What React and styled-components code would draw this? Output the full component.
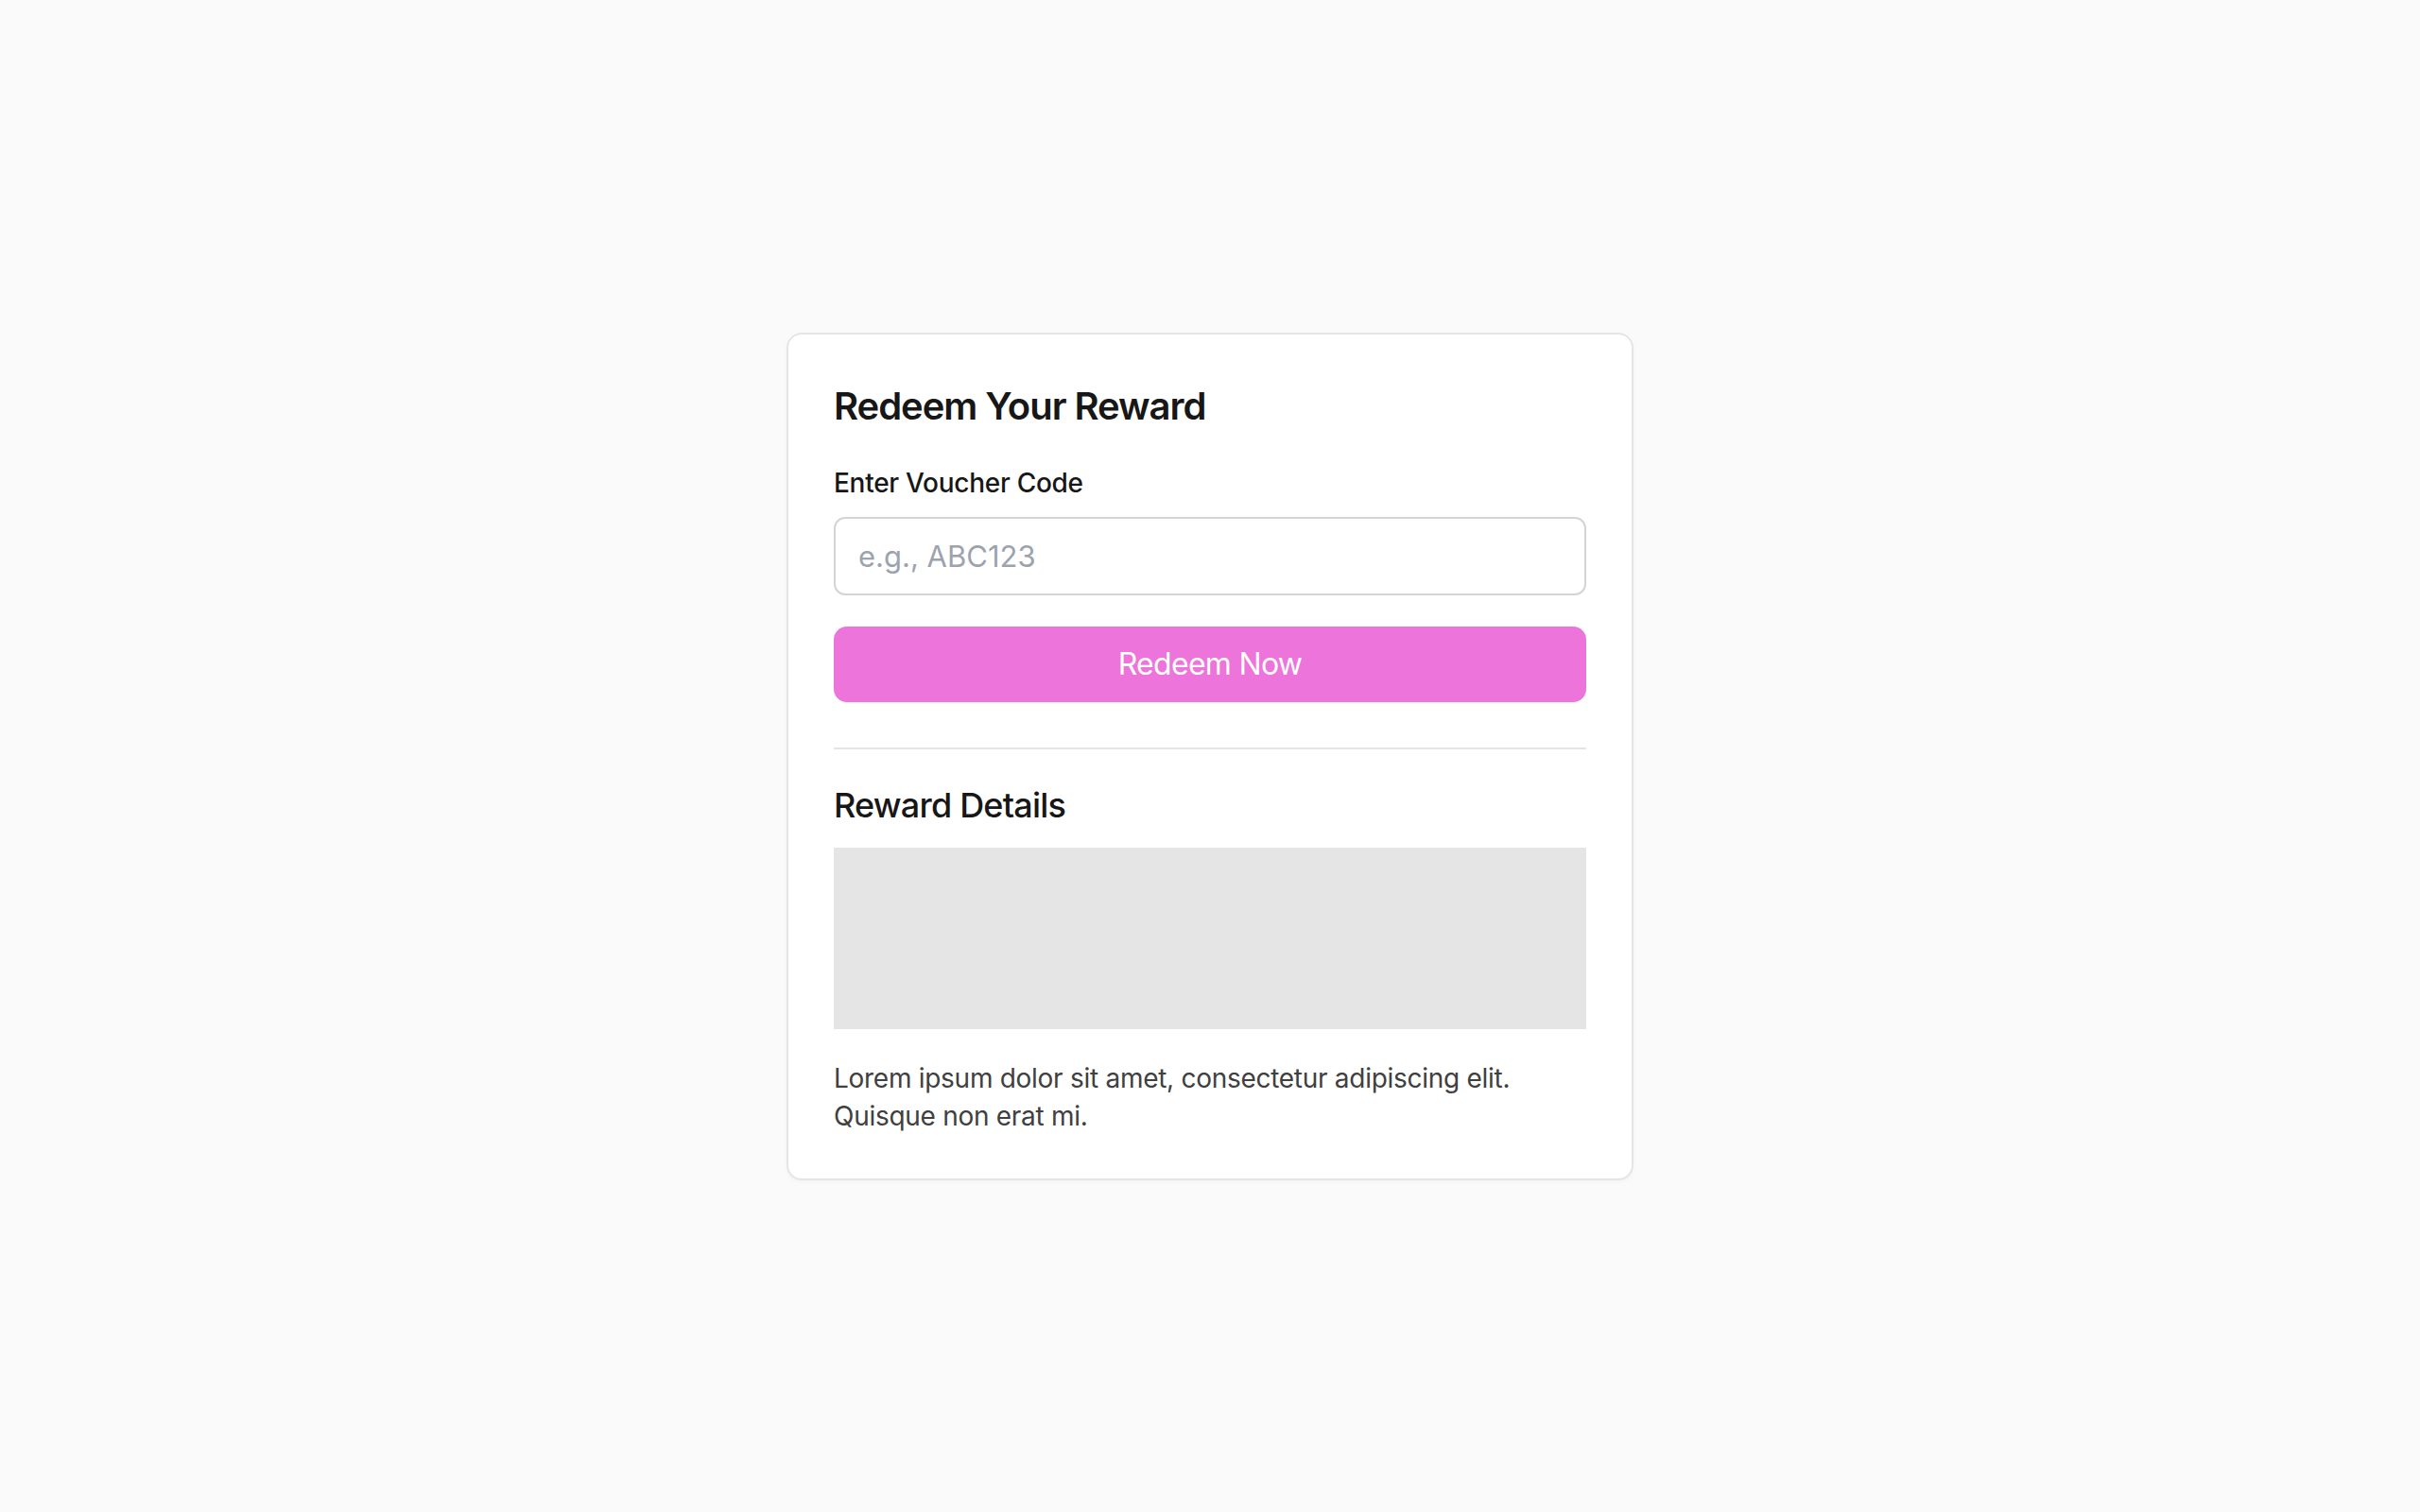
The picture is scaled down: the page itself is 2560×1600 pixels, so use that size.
import React from 'react';
import styled, { createGlobalStyle } from 'styled-components';

const GlobalStyle = createGlobalStyle`
  * { box-sizing: border-box; }
  html, body {
    margin: 0;
    padding: 0;
    background: #fafafa;
    font-family: Inter, "Noto Sans", "Liberation Sans", sans-serif;
    -webkit-font-smoothing: antialiased;
  }
`;

const Page = styled.main`
  min-height: 100vh;
  display: flex;
  align-items: center;
  justify-content: center;
`;

const Card = styled.section`
  width: 896px;
  background: #ffffff;
  border: 2px solid #e5e5e5;
  border-radius: 16px;
  box-shadow: 0 2px 4px rgba(0, 0, 0, 0.03);
  padding: 48px 48px 46px;
  display: flex;
  flex-direction: column;
`;

const Title = styled.h2`
  margin: 0 0 33px;
  font-size: 40px;
  line-height: 56px;
  font-weight: 600;
  letter-spacing: -0.026em;
  color: #171717;
`;

const Label = styled.label`
  display: block;
  margin: 0 0 16px;
  font-size: 28px;
  line-height: 40px;
  font-weight: 500;
  letter-spacing: -0.01em;
  color: #171717;
`;

const Input = styled.input`
  width: 100%;
  height: 83px;
  padding: 0 24px;
  border: 2px solid #d4d4d4;
  border-radius: 12px;
  font-family: inherit;
  font-size: 31px;
  color: #171717;
  outline: none;
  &::placeholder {
    color: #9ca3af;
  }
`;

const Button = styled.button`
  margin-top: 33px;
  width: 100%;
  height: 80px;
  border: none;
  border-radius: 14px;
  background: #ec74da;
  color: #ffffff;
  font-family: inherit;
  font-size: 32px;
  font-weight: 400;
  letter-spacing: -0.022em;
  cursor: pointer;
`;

const Divider = styled.hr`
  margin: 48px 0 31px;
  border: none;
  border-top: 2px solid #e5e5e5;
`;

const SubTitle = styled.h3`
  margin: 0 0 17px;
  font-size: 36px;
  line-height: 56px;
  font-weight: 500;
  letter-spacing: -0.022em;
  color: #171717;
`;

const ImageBox = styled.div`
  height: 192px;
  background: #e5e5e5;
`;

const Description = styled.p`
  margin: 32px 0 0;
  font-size: 28px;
  line-height: 40px;
  letter-spacing: -0.01em;
  color: #404040;
`;

export default function App() {
  return (
    <>
      <GlobalStyle />
      <Page>
        <Card>
          <Title>Redeem Your Reward</Title>
          <Label htmlFor="voucher">Enter Voucher Code</Label>
          <Input id="voucher" type="text" placeholder="e.g., ABC123" />
          <Button type="button">Redeem Now</Button>
          <Divider />
          <SubTitle>Reward Details</SubTitle>
          <ImageBox />
          <Description>
            Lorem ipsum dolor sit amet, consectetur adipiscing elit. Quisque non erat mi.
          </Description>
        </Card>
      </Page>
    </>
  );
}
